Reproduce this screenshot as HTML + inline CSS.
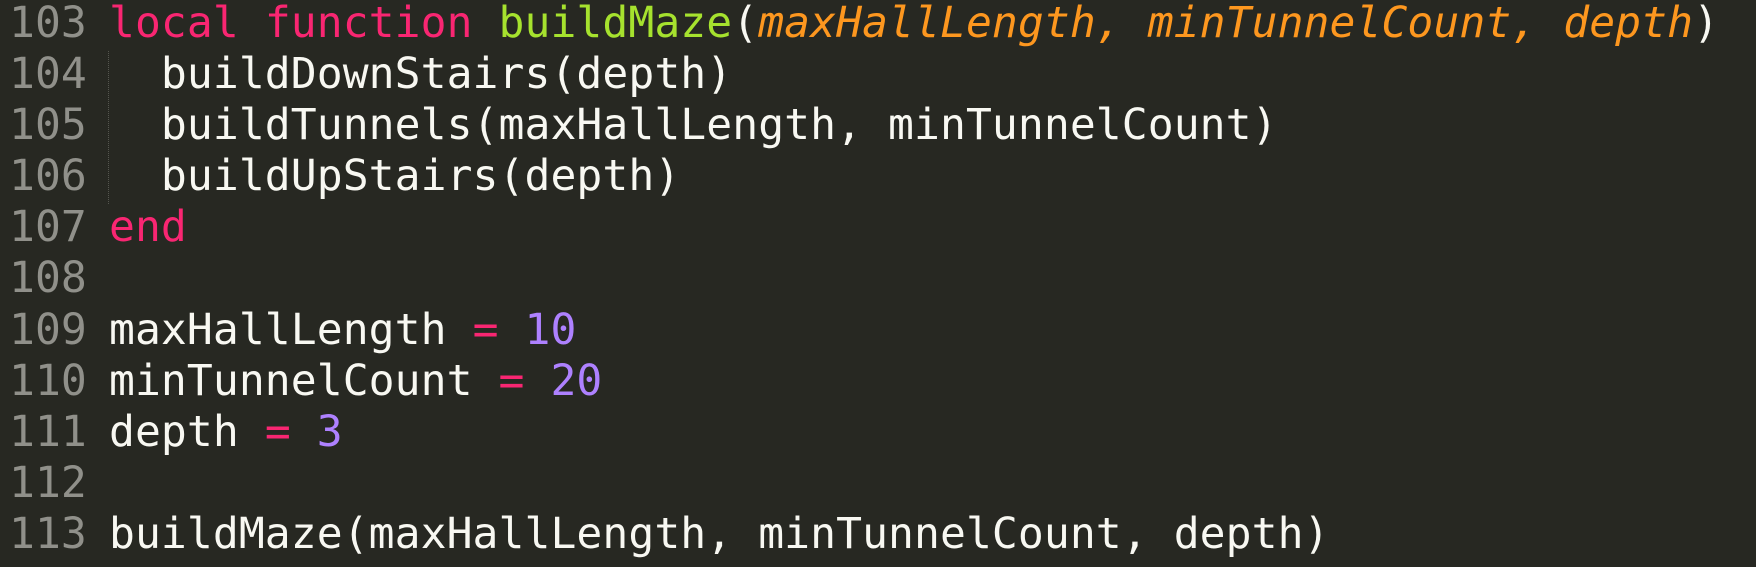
<!DOCTYPE html>
<html><head><meta charset="utf-8"><style>
html,body{margin:0;padding:0;background:#272822;width:1756px;height:567px;overflow:hidden}
.code{position:absolute;left:9px;top:-2px;font-family:"DejaVu Sans Mono","Liberation Mono",monospace;font-size:43px;letter-spacing:0.08px;line-height:51.1px;color:#f8f8f2;white-space:pre}
.n{color:#90908a;display:inline-block;width:100px}
.k{color:#f92672}
.f{color:#a6e22e}
.p{color:#fd971f;font-style:italic}
.c{color:#ae81ff}
.guide{position:absolute;left:108px;top:51px;height:153px;border-left:1px dotted #55564f}
</style></head><body>
<div class="guide"></div>
<div class="code"><span class="n">103</span><span class="k">local</span> <span class="k">function</span> <span class="f">buildMaze</span>(<span class="p">maxHallLength, minTunnelCount, depth</span>)
<span class="n">104</span>  buildDownStairs(depth)
<span class="n">105</span>  buildTunnels(maxHallLength, minTunnelCount)
<span class="n">106</span>  buildUpStairs(depth)
<span class="n">107</span><span class="k">end</span>
<span class="n">108</span>
<span class="n">109</span>maxHallLength <span class="k">=</span> <span class="c">10</span>
<span class="n">110</span>minTunnelCount <span class="k">=</span> <span class="c">20</span>
<span class="n">111</span>depth <span class="k">=</span> <span class="c">3</span>
<span class="n">112</span>
<span class="n">113</span>buildMaze(maxHallLength, minTunnelCount, depth)</div>
</body></html>
